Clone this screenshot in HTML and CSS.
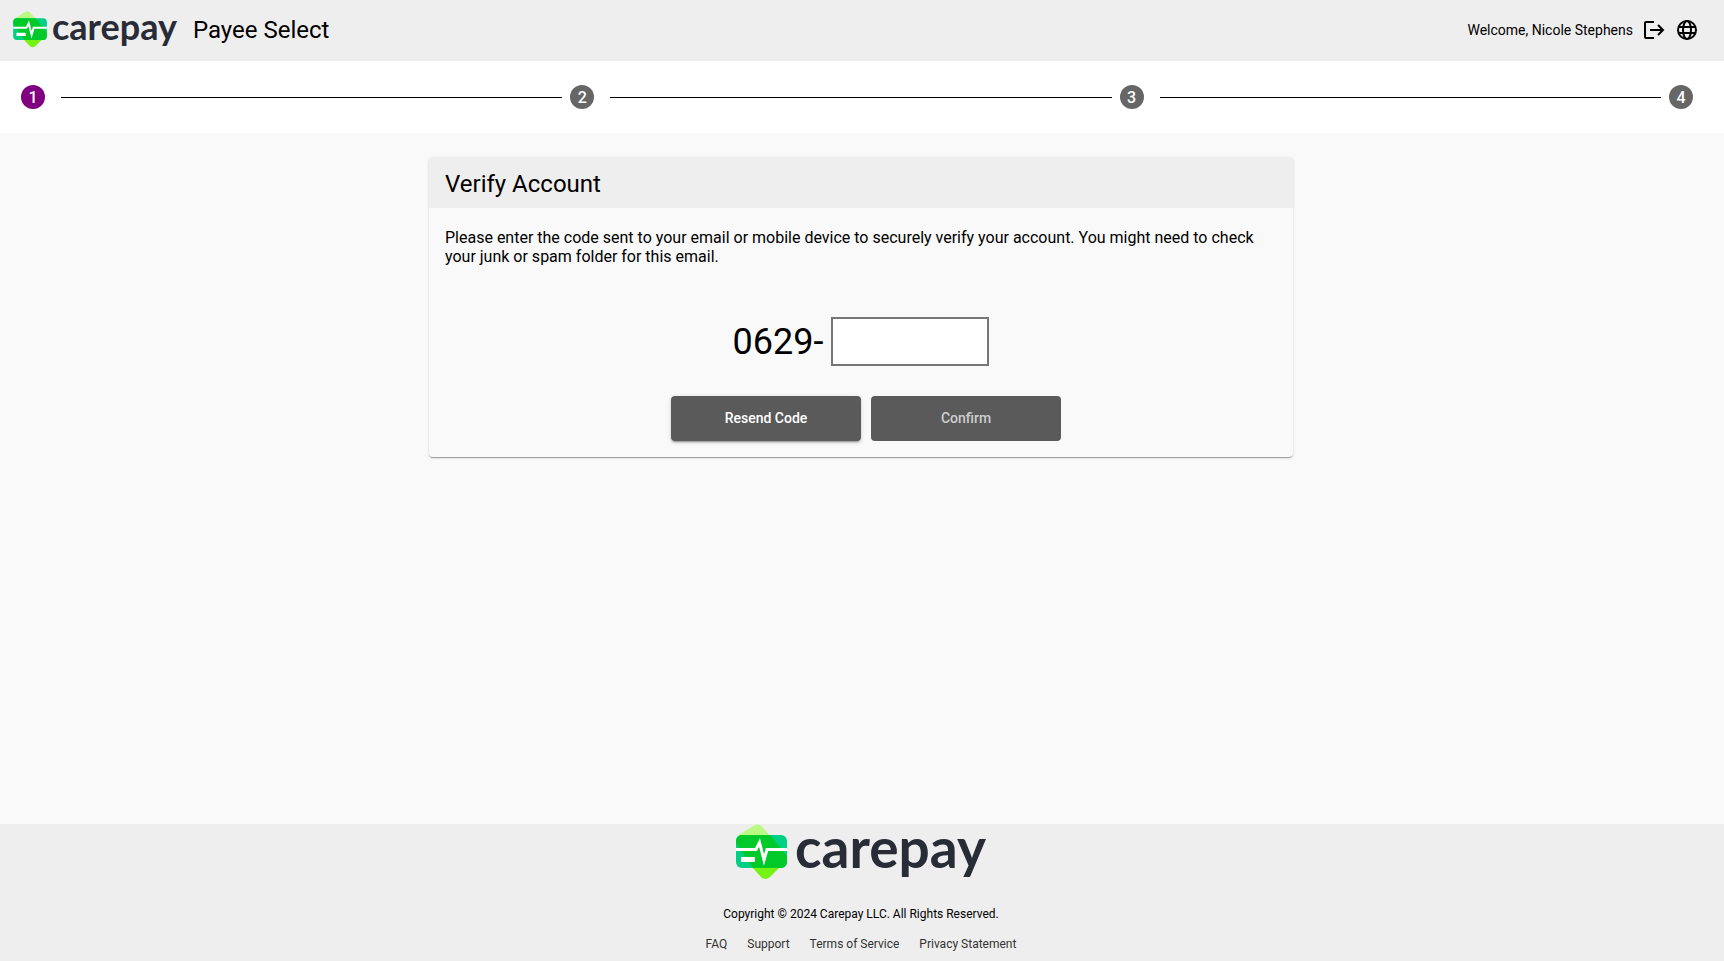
FILE: index.html
```
<!DOCTYPE html>
<html lang="en">
<head>
  <meta charset="UTF-8">
  <meta name="viewport" content="width=device-width, initial-scale=1.0">
  <title>Carepay - Payee Select</title>
  <link rel="stylesheet" href="styles.css">
</head>
<body>
  <!-- shared logo mark, used in header and footer -->
  <svg class="sprite" width="0" height="0" aria-hidden="true">
    <defs>
      <clipPath id="card-shape">
        <rect x="0" y="11" width="51" height="33" rx="6"/>
      </clipPath>
    </defs>
    <symbol id="logo" viewBox="0 0 51 56">
      <path d="M18 1.500Q22 -1 26 2.500L35 13L3 13L1 12Z" fill="#b9f984"/>
      <path d="M15 42L51 36L49 38L34 53Q29 57 25 53Z" fill="#76f314"/>
      <rect x="0" y="11" width="51" height="33" rx="6" fill="#00d084"/>
      <path d="M0 13L4 10H33L51 32V44H17L0 19Z" fill="#00c92a" clip-path="url(#card-shape)"/>
      <path d="M0 25.500H20L23.500 18.500L28 36L31 25.500H51" fill="none" stroke="#fff" stroke-width="3" stroke-miterlimit="8"/>
      <rect x="5" y="33" width="14" height="5" rx="1" fill="#fff"/>
    </symbol>
  </svg>

  <header class="topbar">
    <div class="logo">
      <svg aria-hidden="true"><use href="#logo"/></svg>
      <span>carepay</span>
    </div>
    <h1>Payee Select</h1>
    <div class="user">
      <span>Welcome, Nicole Stephens</span>
      <button class="icon-btn" aria-label="Log out">
        <svg width="24" height="24" viewBox="0 0 24 24" fill="none" stroke="#000" stroke-width="2">
          <path d="M12 4H4Q3 4 3 5V19Q3 20 4 20H12M8 12H20M16 7L21 12L16 17"/>
        </svg>
      </button>
      <button class="icon-btn" aria-label="Language">
        <svg width="24" height="24" viewBox="0 0 24 24" fill="none" stroke="#000" stroke-width="2">
          <circle cx="12" cy="12" r="9"/>
          <ellipse cx="12" cy="12" rx="4" ry="9"/>
          <path d="M4 9H20M4 15H20"/>
        </svg>
      </button>
    </div>
  </header>

  <ol class="stepper">
    <li class="active"><span class="step">1</span></li>
    <li><span class="step">2</span></li>
    <li><span class="step">3</span></li>
    <li><span class="step">4</span></li>
  </ol>

  <main>
    <form class="card">
      <h2>Verify Account</h2>
      <div class="card-content">
        <p>Please enter the code sent to your email or mobile device to securely verify your account. You might need to check your junk or spam folder for this email.</p>
        <div class="code-row">
          <label for="code">0629-</label>
          <input type="text" id="code" maxlength="6">
        </div>
        <div class="actions">
          <button type="button" class="btn">Resend Code</button>
          <button type="submit" class="btn" disabled>Confirm</button>
        </div>
      </div>
    </form>
  </main>

  <footer>
    <div class="logo">
      <svg aria-hidden="true"><use href="#logo"/></svg>
      <span>carepay</span>
    </div>
    <p>Copyright © 2024 Carepay LLC. All Rights Reserved.</p>
    <nav>
      <a href="#">FAQ</a>
      <a href="#">Support</a>
      <a href="#">Terms of Service</a>
      <a href="#">Privacy Statement</a>
    </nav>
  </footer>
</body>
</html>
```
FILE: styles.css
```
* {
  box-sizing: border-box;
}
body {
  margin: 0;
  min-height: 100vh;
  display: flex;
  flex-direction: column;
  background-color: #f9f9f9;
  color: #000;
  font-family: Roboto, sans-serif;
}
.sprite {
  position: absolute;
}
.logo {
  display: flex;
  align-items: flex-start;
  color: #282c37;
  font-family: Lato, sans-serif;
  font-weight: 700;
}
.topbar {
  display: flex;
  align-items: center;
  height: 61px;
  padding: 0 25px 2px 13px;
  background-color: #eee;
}
.topbar .logo {
  gap: 5px;
  font-size: 36px;
  line-height: 30px;
}
.topbar .logo svg {
  width: 34px;
  height: 37px;
}
h1 {
  margin: 0 0 0 16px;
  font-size: 24px;
  font-weight: 400;
}
.user {
  display: flex;
  align-items: center;
  margin-left: auto;
  gap: 9px;
  font-size: 14px;
}
.icon-btn {
  padding: 0;
  border: none;
  background: none;
  cursor: pointer;
}
.icon-btn svg {
  display: block;
}
.stepper {
  display: flex;
  align-items: center;
  height: 72px;
  margin: 0;
  padding: 0 31px 0 21px;
  background-color: #fff;
  list-style: none;
}
.stepper li {
  display: flex;
  flex: 1;
  align-items: center;
}
.stepper li:last-child {
  flex: none;
}
.stepper li:not(:last-child)::after {
  content: "";
  flex: 1;
  height: 1px;
  margin: 0 8px 0 16px;
  background-color: #000;
}
.step {
  width: 24px;
  height: 24px;
  border-radius: 50%;
  background-color: #666;
  color: #fff;
  font-size: 16px;
  font-weight: 500;
  line-height: 25px;
  text-align: center;
}
.active .step {
  background-color: purple;
}
main {
  flex: 1;
  padding: 24px 18px 24px 16px;
}
.card {
  max-width: 864px;
  margin: 0 auto;
  border-radius: 4px;
  box-shadow: 0 2px 1px -1px rgba(0, 0, 0, 0.2), 0 1px 1px 0 rgba(0, 0, 0, 0.14), 0 1px 3px 0 rgba(0, 0, 0, 0.12);
}
h2 {
  margin: 0;
  padding: 3px 16px 0;
  border-radius: 4px 4px 0 0;
  background-color: #eee;
  font-size: 24px;
  font-weight: 400;
  line-height: 48px;
}
.card-content {
  padding: 20px 16px 16px;
}
.card-content p {
  margin: 0;
  font-size: 16px;
  line-height: 19px;
}
.code-row {
  display: flex;
  justify-content: center;
  align-items: center;
  gap: 8px;
  margin: 51px 0 30px;
  font-size: 36px;
}
.code-row input {
  width: 158px;
  height: 49px;
  padding: 0 8px;
  border: 2px solid #767676;
  background-color: #fff;
  font: inherit;
}
.actions {
  display: flex;
  justify-content: center;
}
.btn {
  width: 190px;
  height: 45px;
  margin-left: 10px;
  padding: 0 8px 2px;
  border: none;
  border-radius: 4px;
  background-color: #5a5a5a;
  box-shadow: 0 3px 1px -2px rgba(0, 0, 0, 0.2), 0 2px 2px 0 rgba(0, 0, 0, 0.14), 0 1px 5px 0 rgba(0, 0, 0, 0.12);
  color: #fff;
  font-family: inherit;
  font-size: 14px;
  font-weight: 500;
  cursor: pointer;
}
.btn:disabled {
  box-shadow: none;
  color: #cdcdcd;
  cursor: default;
}
footer {
  display: flex;
  flex-direction: column;
  align-items: center;
  padding: 0 2px 10px 0;
  background-color: #eee;
  font-size: 12px;
  line-height: 14px;
}
footer .logo {
  gap: 8px;
  font-size: 55px;
  line-height: 46px;
}
footer .logo svg {
  width: 51px;
  height: 56px;
}
footer p {
  margin: 27px 0 16px;
}
footer nav {
  display: flex;
  gap: 20px;
}
footer a {
  color: #333;
  text-decoration: none;
}
```
